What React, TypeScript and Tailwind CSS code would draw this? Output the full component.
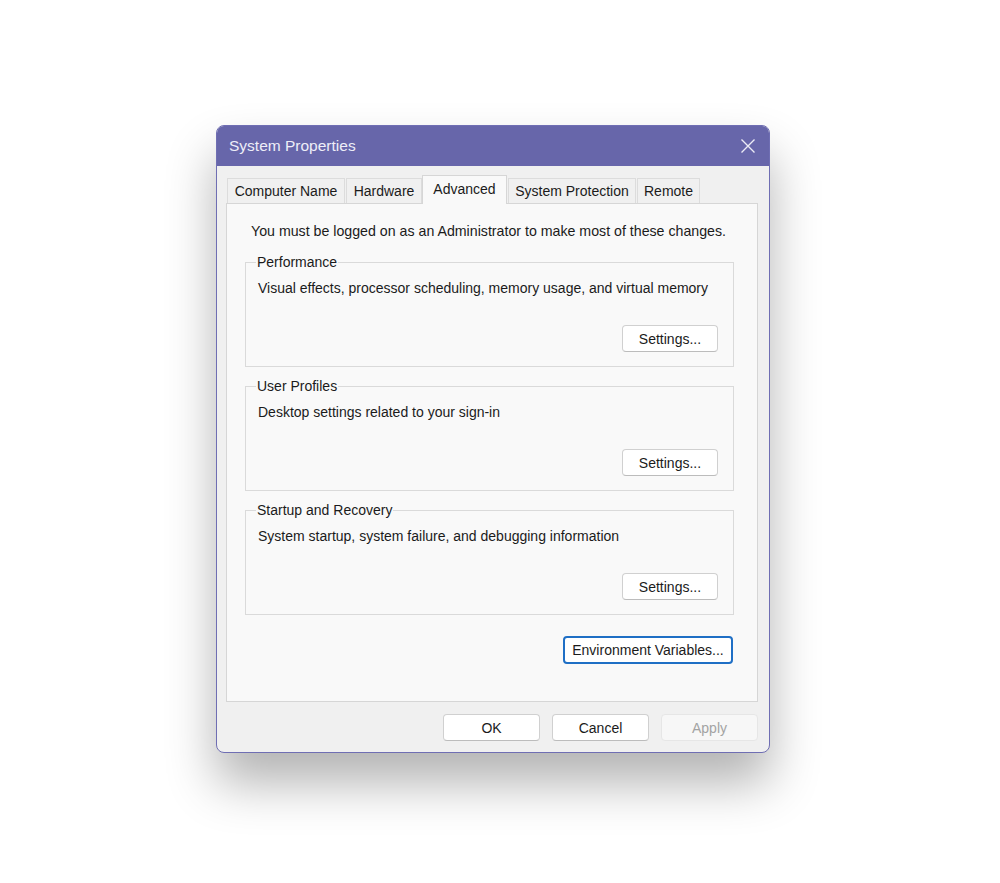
const TABS = [
  { label: "Computer Name", w: 118, cls: "mr-[1px]" },
  { label: "Hardware", w: 76, cls: "" },
  { label: "Advanced", w: 85, active: true, cls: "" },
  { label: "System Protection", w: 128, cls: "ml-[1px]" },
  { label: "Remote", w: 63, cls: "ml-[1px]" },
];

const GROUPS = [
  {
    title: "Performance",
    text: "Visual effects, processor scheduling, memory usage, and virtual memory",
  },
  { title: "User Profiles", text: "Desktop settings related to your sign-in" },
  {
    title: "Startup and Recovery",
    text: "System startup, system failure, and debugging information",
  },
];

function Button({
  children,
  width = "w-[97px]",
  disabled = false,
  focused = false,
}: {
  children: React.ReactNode;
  width?: string;
  disabled?: boolean;
  focused?: boolean;
}) {
  let cls =
    "h-[27px] rounded-[4px] bg-white border border-[#d0d0d0] border-b-[#bcbcbc] text-[#1b1b1b]";
  if (disabled) cls = "h-[27px] rounded-[4px] bg-[#f7f7f7] border border-[#e6e6e6] text-[#a3a3a3]";
  if (focused) cls = "h-[28px] rounded-[4px] bg-white border-2 border-[#1f6fc5] text-[#1b1b1b]";
  return (
    <button className={`${width} ${cls} flex items-center justify-center text-[14px] leading-none`}>
      {children}
    </button>
  );
}

function GroupBox({ title, text }: { title: string; text: string }) {
  return (
    <div className="relative h-[105px] border border-[#dadada] pl-[12px] pr-[15px] pt-[15px]">
      <span className="absolute -top-[11px] left-[10px] bg-[#f9f9f9] px-[1px] text-[14px] leading-[20px]">
        {title}
      </span>
      <p className="text-[14px] leading-[20px]">{text}</p>
      <div className="flex justify-end mt-[27px]">
        <Button width="w-[96px]">Settings...</Button>
      </div>
    </div>
  );
}

export default function App() {
  return (
    <div
      className="w-[1000px] h-[883px] bg-white pt-[125px] pl-[216px] text-[#1b1b1b]"
      style={{ fontFamily: '"Liberation Sans", Arial, sans-serif' }}
    >
      <div className="w-[554px] h-[628px] rounded-[8px] border border-[#6f6eb3] bg-[#f0f0f0] overflow-hidden shadow-[0_30px_50px_rgba(0,0,0,0.3)] flex flex-col">
        {/* Title bar */}
        <div className="h-[40px] shrink-0 bg-[#6766aa] flex items-center justify-between pl-[12px] pr-[13px]">
          <span className="text-[15.5px] text-[#eeeef8]">System Properties</span>
          <svg width="16" height="16" viewBox="0 0 16 16" className="mt-[-1px]">
            <path d="M1.5 1.5 L14.5 14.5 M14.5 1.5 L1.5 14.5" stroke="#ececf6" strokeWidth="1.4" />
          </svg>
        </div>

        {/* Body */}
        <div className="flex-1 pl-[9px] pr-[11px] pt-[9px]">
          {/* Tabs */}
          <div className="flex items-end h-[28px] pl-[1px]">
            {TABS.map((t) =>
              t.active ? (
                <div
                  key={t.label}
                  style={{ width: t.w }}
                  className="relative z-10 h-[29px] -mb-px bg-[#f9f9f9] border border-b-0 border-[#d6d6d6] flex items-start justify-center pt-[3px] text-[14px]"
                >
                  {t.label}
                </div>
              ) : (
                <div
                  key={t.label}
                  style={{ width: t.w }}
                  className={`${t.cls} h-[25px] bg-[#f0f0f0] border border-b-0 border-[#dcdcdc] flex items-center justify-center text-[14px]`}
                >
                  {t.label}
                </div>
              )
            )}
          </div>

          {/* Panel */}
          <div className="h-[499px] bg-[#f9f9f9] border border-[#d6d6d6] pl-[18px] pr-[23px] pt-[17px]">
            <p className="text-[14.2px] leading-[20px] pl-[6px]">
              You must be logged on as an Administrator to make most of these changes.
            </p>
            <div className="flex flex-col gap-[19px] mt-[21px]">
              {GROUPS.map((g) => (
                <GroupBox key={g.title} title={g.title} text={g.text} />
              ))}
            </div>
            <div className="flex justify-end mt-[21px] pr-[1px]">
              <Button width="w-[170px]" focused>
                Environment Variables...
              </Button>
            </div>
          </div>

          {/* Footer */}
          <div className="flex justify-end gap-[12px] pt-[12px]">
            <Button>OK</Button>
            <Button>Cancel</Button>
            <Button disabled>Apply</Button>
          </div>
        </div>
      </div>
    </div>
  );
}
